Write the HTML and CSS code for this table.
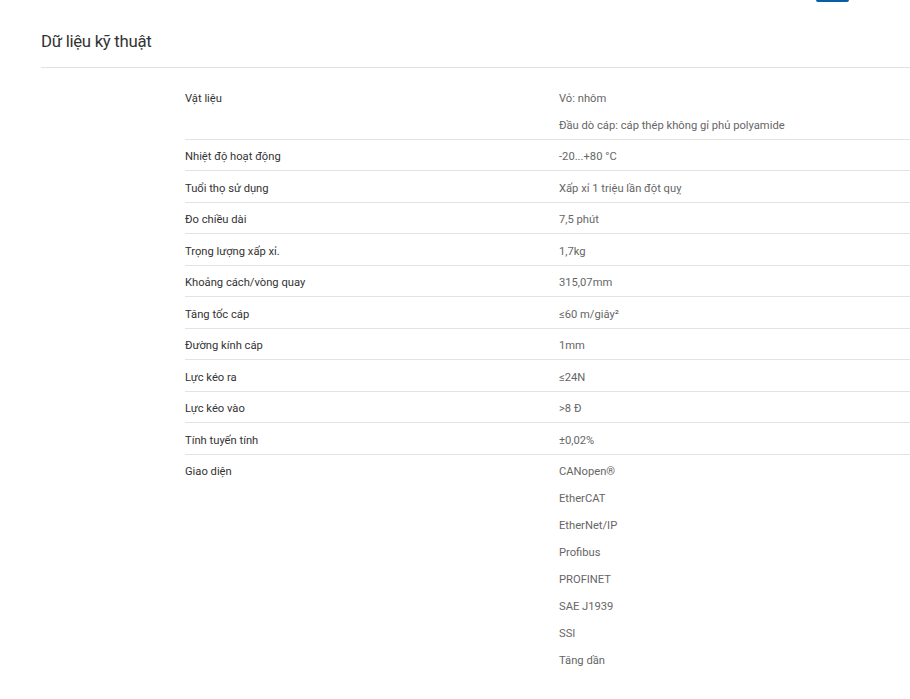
FILE: index.html
```html
<!DOCTYPE html>
<html lang="vi">
<head>
<meta charset="utf-8">
<title>Dữ liệu kỹ thuật</title>
<link rel="stylesheet" href="styles.css">
</head>
<body>
<div class="topbar"><span class="top-btn"></span></div>
<section class="specs">
  <h2 class="specs-title">Dữ liệu kỹ thuật</h2>
  <div class="spec-table">
    <div class="spec-row">
      <div class="spec-label">Vật liệu</div>
      <div class="spec-values"><div>Vỏ: nhôm</div><div>Đầu dò cáp: cáp thép không gỉ phủ polyamide</div></div>
    </div>
    <div class="spec-row">
      <div class="spec-label">Nhiệt độ hoạt động</div>
      <div class="spec-values"><div>-20...+80 °C</div></div>
    </div>
    <div class="spec-row">
      <div class="spec-label">Tuổi thọ sử dụng</div>
      <div class="spec-values"><div>Xấp xỉ 1 triệu lần đột quỵ</div></div>
    </div>
    <div class="spec-row">
      <div class="spec-label">Đo chiều dài</div>
      <div class="spec-values"><div>7,5 phút</div></div>
    </div>
    <div class="spec-row">
      <div class="spec-label">Trọng lượng xấp xỉ.</div>
      <div class="spec-values"><div>1,7kg</div></div>
    </div>
    <div class="spec-row">
      <div class="spec-label">Khoảng cách/vòng quay</div>
      <div class="spec-values"><div>315,07mm</div></div>
    </div>
    <div class="spec-row">
      <div class="spec-label">Tăng tốc cáp</div>
      <div class="spec-values"><div>≤60 m/giây²</div></div>
    </div>
    <div class="spec-row">
      <div class="spec-label">Đường kính cáp</div>
      <div class="spec-values"><div>1mm</div></div>
    </div>
    <div class="spec-row">
      <div class="spec-label">Lực kéo ra</div>
      <div class="spec-values"><div>≤24N</div></div>
    </div>
    <div class="spec-row">
      <div class="spec-label">Lực kéo vào</div>
      <div class="spec-values"><div>&gt;8 Đ</div></div>
    </div>
    <div class="spec-row">
      <div class="spec-label">Tính tuyến tính</div>
      <div class="spec-values"><div>±0,02%</div></div>
    </div>
    <div class="spec-row">
      <div class="spec-label">Giao diện</div>
      <div class="spec-values">
        <div>CANopen®</div>
        <div>EtherCAT</div>
        <div>EtherNet/IP</div>
        <div>Profibus</div>
        <div>PROFINET</div>
        <div>SAE J1939</div>
        <div>SSI</div>
        <div>Tăng dần</div>
      </div>
    </div>
  </div>
</section>
</body>
</html>
```
FILE: styles.css
```css
html, body {
  margin: 0;
  padding: 0;
  background: #ffffff;
}
body {
  font-family: Roboto, "Liberation Sans", Arial, sans-serif;
  color: #333333;
  overflow: hidden;
}
.topbar {
  height: 2px;
  display: flex;
  padding-left: 816px;
}
.top-btn {
  display: block;
  width: 33px;
  height: 2px;
  background: #0b5ca6;
  border-radius: 0 0 8px 8px;
}
.specs {
  padding-left: 41px;
}
.specs-title {
  margin: 27px 0 0 0;
  padding-bottom: 14px;
  font-size: 16.8px;
  line-height: 24px;
  font-weight: 400;
  letter-spacing: -0.3px;
  color: #333333;
  border-bottom: 1px solid #e2e2e2;
}
.spec-table {
  margin: 13px 0 0 144px;
  font-size: 11.2px;
}
.spec-row {
  display: flex;
  padding: 3.5px 0 0 0;
  border-top: 1px solid #e3e3e3;
}
.spec-row:first-child {
  border-top: 0;
}
.spec-label {
  width: 374px;
  flex: none;
  line-height: 27px;
  color: #333333;
}
.spec-values {
  line-height: 27px;
  color: #666666;
}
```
